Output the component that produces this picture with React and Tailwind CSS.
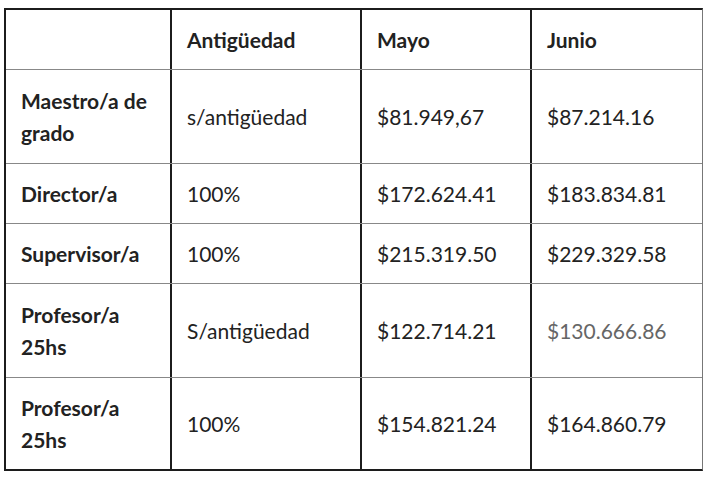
const rows = [
  { h: "h-[94px]", label: "Maestro/a de grado", ant: "s/antigüedad", mayo: "$81.949,67", junio: "$87.214.16" },
  { h: "h-[60px]", label: "Director/a", ant: "100%", mayo: "$172.624.41", junio: "$183.834.81" },
  { h: "h-[60px]", label: "Supervisor/a", ant: "100%", mayo: "$215.319.50", junio: "$229.329.58" },
  { h: "h-[94px]", label: "Profesor/a 25hs", ant: "S/antigüedad", mayo: "$122.714.21", junio: "$130.666.86", muted: true },
  { h: "h-[91px]", label: "Profesor/a 25hs", ant: "100%", mayo: "$154.821.24", junio: "$164.860.79" },
]

const cols = "grid grid-cols-[166px_190px_170px_170px]"

function Cell({ children, className = "", last = false }) {
  return (
    <div className={`flex items-center px-[15px] ${last ? "" : "border-r-2 border-[#1c1c1c]"} ${className}`}>
      {children}
    </div>
  )
}

export default function App() {
  return (
    <div className="min-h-[478px] w-[703px] bg-white pt-[8px] pl-[4px]" style={{ fontFamily: "Lato, 'Open Sans', sans-serif" }}>
      <div className="w-[699px] border-t-2 border-l-2 border-b-2 border-r border-[#1c1c1c] border-r-[#777] text-[21px] leading-[32px] text-[#222]">
        <div className={`${cols} h-[60px] border-b border-[#888]`}>
          <Cell></Cell>
          <Cell className="font-bold">Antigüedad</Cell>
          <Cell className="font-bold">Mayo</Cell>
          <Cell className="font-bold" last>Junio</Cell>
        </div>
        {rows.map((r, i) => (
          <div key={i} className={`${cols} ${r.h} ${i < rows.length - 1 ? "border-b border-[#888]" : ""}`}>
            <Cell className="font-bold pr-[10px]">{r.label}</Cell>
            <Cell>{r.ant}</Cell>
            <Cell>{r.mayo}</Cell>
            <Cell className={r.muted ? "text-[#666]" : ""} last>{r.junio}</Cell>
          </div>
        ))}
      </div>
    </div>
  )
}
